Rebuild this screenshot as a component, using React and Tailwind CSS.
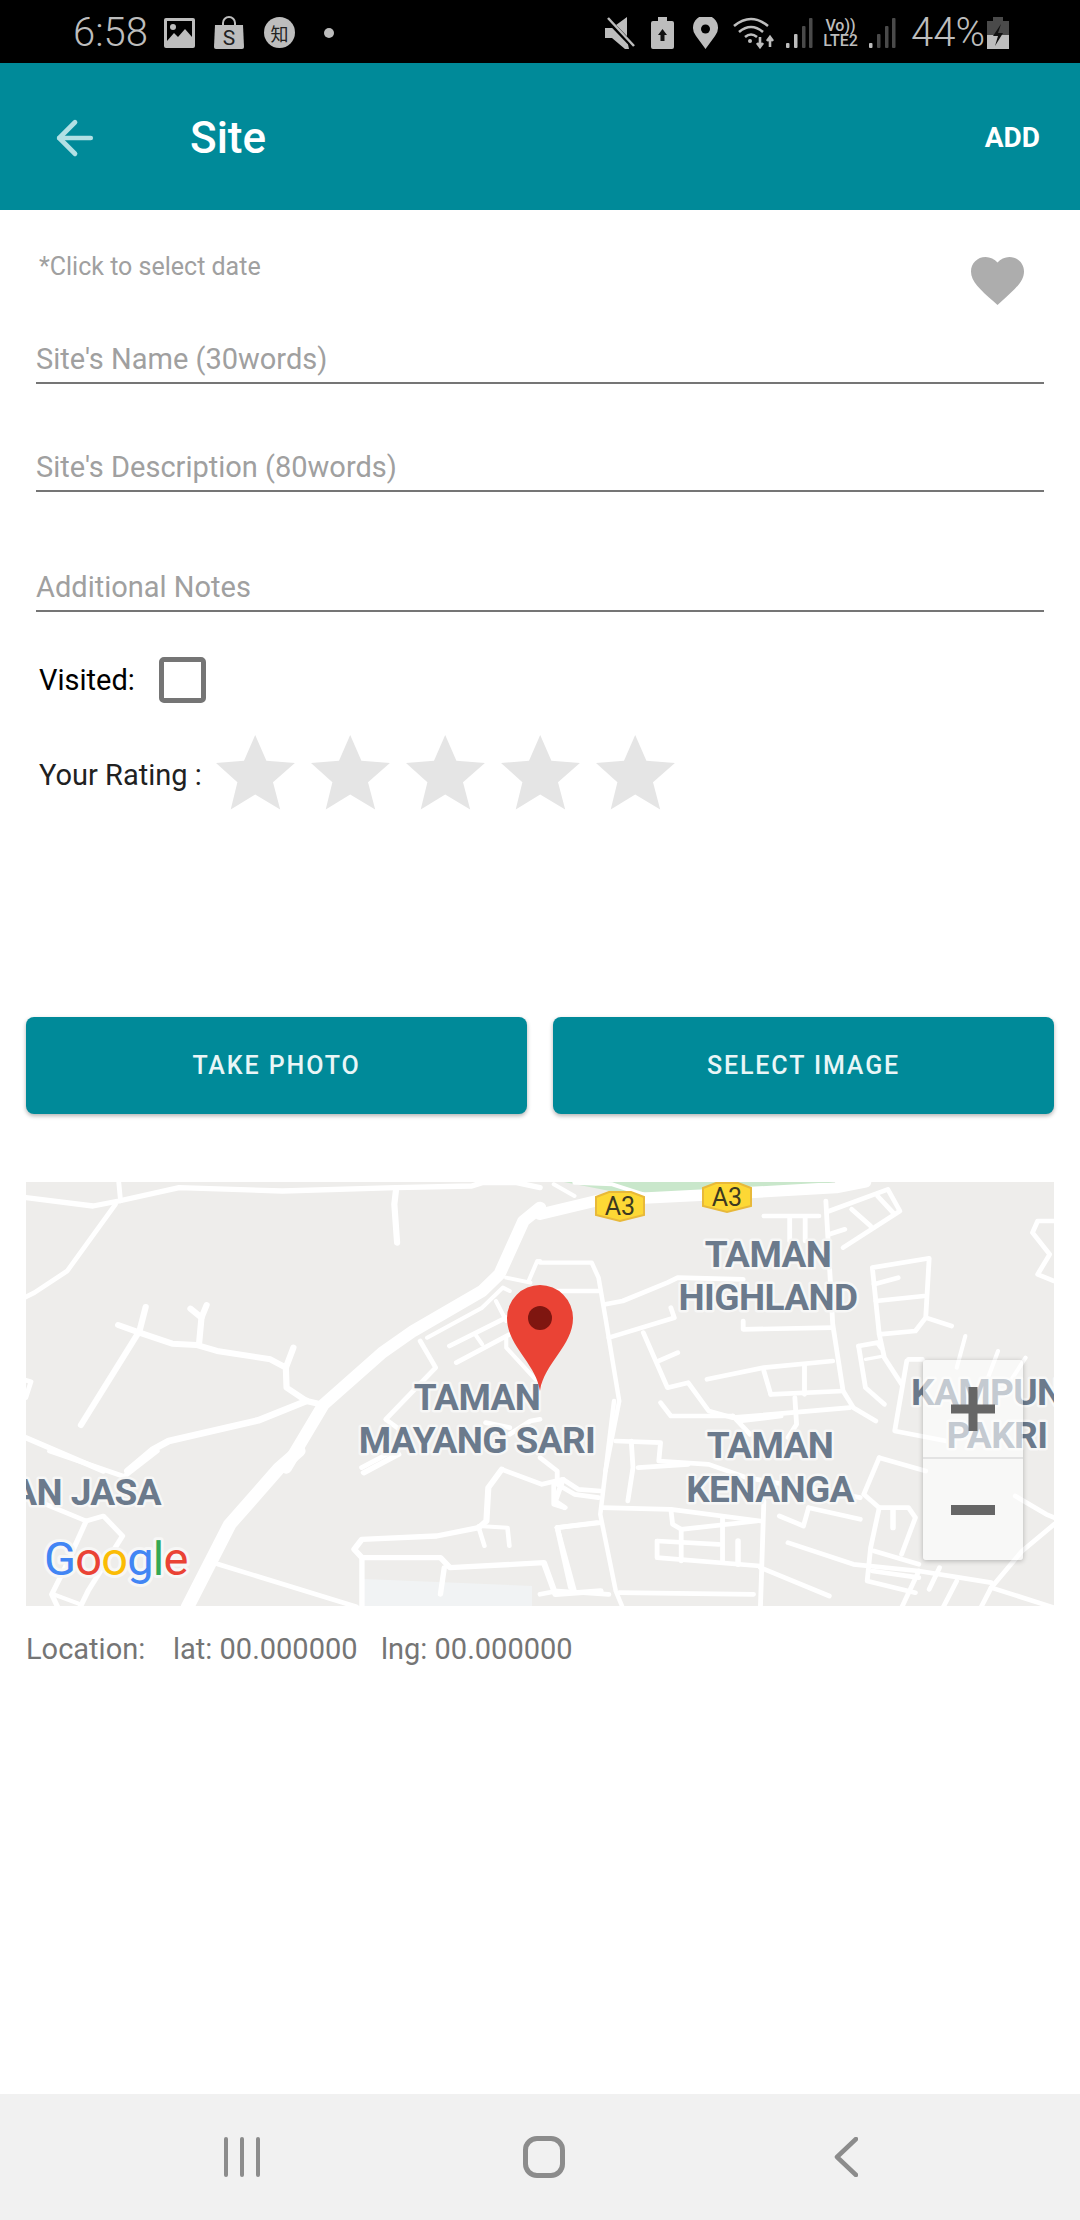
import { ArrowLeft } from 'lucide-react'

const ROBOTO = 'font-[Roboto,sans-serif]'

// road polylines, taken from crops of the map: [stroke width, x, y, x, y, ...]
const ROADS_TL = [
  [16, 75,80,270,105,345,90,520,50,820,60,1150,50,1370,45,1400,35,1500,35,1568,50],
  [14, 345,35,350,90],
  [14, 335,100,195,300,100,365,75,378],
  [18, 1150,55,1145,100,1153,215],
  [18, 343,462,405,485,500,518,570,522,630,540,785,565,830,590,832,650,890,690,940,702],
  [18, 423,408,405,480,235,762],
  [18, 553,413,585,440,600,402],
  [18, 585,440,578,518],
  [18, 852,530,830,590],
  [20, 890,690,750,748,490,810,445,835,370,900],
  [16, 75,800,300,900],
  [14, 75,628,90,632,75,680],
  [36, 1568,110,1520,150,1450,310,1400,360,1200,480,1110,545,940,700,830,890],
  [12, 1240,500,1400,410,1460,350,1480,360],
  [14, 1305,525,1470,440],
  [14, 1325,575,1480,490],
  [12, 1380,490,1400,520],
  [12, 1440,390,1470,450],
  [12, 1470,320,1540,335],
  [12, 1535,330,1560,270,1568,270],
  [14, 1220,510,1265,590,1120,745,1180,790],
  [14, 1050,890,1160,830],
  [14, 1480,790,1540,750,1568,745],
  [14, 1410,755,1480,770],
  [12, 1470,500,1470,530,1568,640],
]

const ROADS_TR = [
  [34, 0,130,170,88,480,72,860,50,945,33],
  [12, 40,40,100,75],
  [12, 100,35,210,40,300,70],
  [14, 830,90,850,460,880,660,910,710,975,750],
  [14, 650,135,810,135],
  [14, 725,140,725,210],
  [14, 770,140,770,210],
  [14, 840,120,1010,55,1045,120,880,230],
  [14, 905,115,960,165],
  [14, 980,75,1025,125],
  [14, 840,190,885,175],
  [13, 0,275,150,275,170,320,190,440,230,690,190,900],
  [14, 0,360,170,360],
  [14, 190,400,240,390,370,335,400,320,590,325],
  [14, 200,500,390,440,380,410],
  [14, 300,485,370,650,430,635,490,720,560,740,900,710],
  [14, 345,570,400,545],
  [14, 590,450,590,475,850,470],
  [14, 485,625,650,590,850,570],
  [14, 650,600,670,670],
  [14, 768,585,768,670],
  [14, 670,670,880,660],
  [14, 350,695,380,735,560,735],
  [14, 560,735,610,790],
  [14, 580,750,700,735],
  [14, 740,680,745,760,720,800],
  [14, 965,290,1130,262,1120,440,1090,480,985,490,965,290],
  [14, 970,340,1040,320],
  [14, 975,390,1115,375],
  [14, 1120,440,1195,465],
  [14, 985,490,1000,560,1050,640],
  [14, 925,525,980,515,990,530],
  [14, 925,525,945,650,1000,700],
  [10, 945,565,1000,555],
  [12, 1235,495,1210,590],
  [12, 1330,540,1290,650],
  [12, 1410,560,1360,640],
  [14, 1070,565,1110,565],
  [14, 1065,570,1030,780,1180,810],
  [14, 1493,150,1445,150,1430,185,1480,250,1445,310,1493,330],
]

const ROADS_BR = [
  [13, 215,0,175,340,220,570,240,620],
  [14, 180,320,380,325,640,360],
  [14, 220,120,350,125,345,180,490,190,600,230,930,290],
  [14, 265,120,270,200,255,300],
  [14, 285,200,430,190],
  [14, 380,325,385,370,410,385,630,360],
  [14, 410,385,410,480],
  [14, 530,350,530,480],
  [14, 340,420,340,470,640,495],
  [14, 340,420,520,430],
  [16, 575,420,575,490],
  [14, 650,300,640,620],
  [14, 640,500,840,585],
  [14, 720,425,910,490,1100,510,1310,545],
  [14, 695,345,765,375,780,320],
  [14, 780,320,930,355],
  [14, 985,170,940,280,985,320,1070,320,1090,350,1050,460],
  [14, 985,170,1120,210],
  [16, 1025,325,1025,380],
  [14, 985,320,960,440,950,540,1090,575],
  [14, 970,450,1100,490],
  [14, 965,510,1100,530],
  [14, 0,580,50,570,200,580],
  [14, 50,380,165,365],
  [14, 50,380,100,570],
  [14, 230,575,620,580],
  [14, 0,170,50,210,50,250,100,280,170,290],
  [14, 40,250,40,310,70,320],
  [14, 1130,565,1160,500],
  [14, 1380,285,1470,340,1493,350],
  [14, 1493,370,1400,450,1310,560,1280,620],
  [14, 1210,540,1170,620],
  [14, 1310,560,1493,620],
  [14, 1100,510,1050,620],
]

const ROADS_BL = [
  [36, 780,0,730,50,600,220,490,467],
  [14, 130,0,320,75],
  [14, 410,0,320,80],
  [14, 120,160,225,210,270,195,320,255,230,420,210,467],
  [14, 225,210,170,350,135,430,150,467],
  [12, 140,430,210,460],
  [14, 570,340,930,467],
  [16, 950,65,1040,10],
  [14, 1310,55,1415,100,1470,85,1510,115,1568,120],
  [16, 1310,55,1275,110,1270,210,1250,230,1140,255,945,265,925,295,945,320,1150,320,1175,350,1420,335,1450,430,1568,420],
  [14, 945,320,945,467],
  [12, 1250,230,1265,285],
  [12, 1250,225,1325,230,1330,285],
  [14, 1160,350,1150,430],
  [14, 1455,230,1568,215],
  [14, 1455,230,1490,410],
  [14, 1470,85,1450,150,1475,170],
]

function Roads({ data, transform }) {
  return (
    <g transform={transform} fill="none" stroke="#ffffff" strokeLinecap="round" strokeLinejoin="round">
      {data.map(([w, ...pts], i) => (
        <polyline key={i} strokeWidth={w} points={pts.join(' ')} />
      ))}
    </g>
  )
}

const LABELS = [
  ['TAMAN', 768, 1266], ['HIGHLAND', 768, 1309],
  ['TAMAN', 477, 1409], ['MAYANG SARI', 477, 1452],
  ['TAMAN', 770, 1457], ['KENANGA', 770, 1501],
  ['PAKRI', 997, 1447],
]

function MapLabel({ x, y, anchor = 'middle', children }) {
  return (
    <text
      x={x} y={y} textAnchor={anchor} fontFamily="Roboto" fontWeight="700" fontSize="37" letterSpacing="-0.6"
      fill="#6b7a8c" stroke="#f7f7f6" strokeWidth="5" paintOrder="stroke" strokeLinejoin="round"
    >
      {children}
    </text>
  )
}

function Shield({ cx, cy }) {
  return (
    <g>
      <path
        d={`M${cx - 24} ${cy - 9} L${cx - 11} ${cy - 14} H${cx + 11} L${cx + 24} ${cy - 9} V${cy + 9} L${cx} ${cy + 15} L${cx - 24} ${cy + 9} Z`}
        fill="#fdd835" stroke="#e8b93a" strokeWidth="2"
      />
      <text x={cx} y={cy + 9} textAnchor="middle" fontFamily="Roboto" fontSize="25" fill="#3c3a20">A3</text>
    </g>
  )
}

function GoogleMap() {
  return (
    <div className="relative mx-[26px] mt-[68px] h-[424px] overflow-hidden bg-[#eeedeb]">
      <svg width="1028" height="424" viewBox="26 1181 1028 424" className="block">
        <path d="M564 1181 H836 L800 1186 L700 1194 L610 1190 Z" fill="#c9e7cb" />
        <path d="M364 1578 L532 1585 V1605 H364 Z" fill="#f1f3f4" />
        <Roads data={ROADS_TL} transform="translate(0 1170) scale(.3444 .3333)" />
        <Roads data={ROADS_TR} transform="translate(540 1170) scale(.3444 .3333)" />
        <Roads data={ROADS_BR} transform="translate(540 1400) scale(.3444 .3333)" />
        <Roads data={ROADS_BL} transform="translate(0 1450) scale(.383 .3333)" />
        <Shield cx={620} cy={1205} />
        <Shield cx={727} cy={1196} />
        {LABELS.map(([t, x, y], i) => (
          <MapLabel key={i} x={x} y={y}>{t}</MapLabel>
        ))}
        <MapLabel x={911} y={1404} anchor="start">KAMPUN</MapLabel>
        <MapLabel x={161} y={1504} anchor="end">AN JASA</MapLabel>
        <path d="M540 1390 C536 1362 507 1345 507 1317 A33 33 0 0 1 573 1317 C573 1345 544 1362 540 1390Z" fill="#ea4335" />
        <circle cx="540" cy="1317" r="12" fill="#7f1610" />
        <text
          x="44" y="1574" fontFamily="Roboto" fontWeight="400" fontSize="47" letterSpacing="-0.8"
          stroke="#f7f7f6" strokeWidth="6" paintOrder="stroke" strokeLinejoin="round"
        >
          <tspan fill="#4285f4">G</tspan>
          <tspan fill="#ea4335">o</tspan>
          <tspan fill="#fbbc05">o</tspan>
          <tspan fill="#4285f4">g</tspan>
          <tspan fill="#34a853">l</tspan>
          <tspan fill="#ea4335">e</tspan>
        </text>
      </svg>

      {/* zoom control sits over the map and lets the labels show through */}
      <div className="absolute left-[897px] top-[178px] flex h-[200px] w-[100px] flex-col rounded-[3px] bg-white/60 shadow-[0_1px_5px_rgba(0,0,0,0.25)]">
        <div className="flex h-[99px] items-center justify-center border-b-2 border-[#e3e3e3]">
          <svg width="44" height="44" viewBox="0 0 44 44"><path d="M0 17.5H44V26.5H0ZM17.5 0H26.5V44H17.5Z" fill="#666666" /></svg>
        </div>
        <div className="flex flex-1 items-center justify-center">
          <svg width="44" height="10" viewBox="0 0 44 10"><rect width="44" height="10" fill="#666666" /></svg>
        </div>
      </div>
    </div>
  )
}

function Signal({ bright }) {
  return (
    <svg width="27" height="30" viewBox="0 0 27 30">
      {[[0, 25, 5], [8, 16, 14], [16, 8, 22], [23, 0, 30]].map(([x, y, h], i) => (
        <rect key={i} x={x} y={y} width="3.5" height={h} rx="1" fill={i < bright ? '#bdbdbd' : '#4a4a4a'} />
      ))}
    </svg>
  )
}

function StatusBar() {
  return (
    <div className={`flex h-[63px] items-center bg-black pt-[2px] pl-[73px] text-[#bdbdbd] ${ROBOTO}`}>
      <span className="w-[91px] text-[40px] leading-none font-light">6:58</span>
      <svg width="31" height="30" viewBox="0 0 31 30">
        <rect width="31" height="30" rx="2" fill="#bdbdbd" />
        <rect x="3" y="3" width="25" height="20" fill="#000" />
        <circle cx="9" cy="9" r="3" fill="#bdbdbd" />
        <path d="M3 23 L10 15 L14 19 L21 11 L28 19 V24 H3Z" fill="#bdbdbd" />
      </svg>
      <svg width="30" height="33" viewBox="0 0 30 33" className="ml-[19px]">
        <path d="M9 10 V7 A6 6 0 0 1 21 7 V10" fill="none" stroke="#bdbdbd" strokeWidth="2" />
        <path d="M1 9 H29 L30 31 Q30 33 28 33 H2 Q0 33 0 31 Z" fill="#bdbdbd" />
        <text x="15" y="29" textAnchor="middle" fontFamily="Roboto" fontSize="21" fill="#222">S</text>
      </svg>
      <span className="ml-[20px] flex h-[31px] w-[31px] items-center justify-center rounded-full bg-[#bdbdbd] font-['Noto_Sans_CJK_SC',sans-serif] text-[18px] leading-none text-[#222]">知</span>
      <span className="ml-[29px] h-[10px] w-[10px] rounded-full bg-[#bdbdbd]" />

      <svg width="30" height="32" viewBox="0 0 30 32" className="ml-[271px]">
        <path d="M0 11 H7 L22 0 V22 L24 32 H20 L7 21 H0 Z" fill="#bdbdbd" />
        <path d="M1 1 L29 30" stroke="#000" strokeWidth="5" />
        <path d="M3 1 L29 29" stroke="#bdbdbd" strokeWidth="2.5" />
      </svg>
      <svg width="23" height="32" viewBox="0 0 23 32" className="ml-[16px]">
        <path d="M7 0 H16 V4 H21 Q23 4 23 6 V30 Q23 32 21 32 H2 Q0 32 0 30 V6 Q0 4 2 4 H7 Z" fill="#bdbdbd" />
        <path d="M11.5 12 L16 18 H13.5 V24 H9.5 V18 H7 Z" fill="#111" />
      </svg>
      <svg width="25" height="32" viewBox="0 0 25 32" className="ml-[19px]">
        <path d="M12.5 32 L3 19 A12.5 12.5 0 1 1 22 19 Z" fill="#bdbdbd" />
        <circle cx="12.5" cy="12" r="4.5" fill="#000" />
      </svg>
      <svg width="41" height="32" viewBox="0 0 41 32" className="ml-[15px]" fill="none" stroke="#bdbdbd" strokeWidth="2.6">
        <path d="M1 9 Q18 -5 35 9" />
        <path d="M6 15 Q18 5 30 15" />
        <path d="M12 20 Q18 15 24 20" />
        <circle cx="17" cy="24" r="2" fill="#bdbdbd" stroke="none" />
        <path d="M27 20 V30 M24 26 L27 30 L30 26 M37 30 V20 M34 24 L37 20 L40 24" />
      </svg>
      <span className="ml-[12px]"><Signal bright={2} /></span>
      <span className="ml-[8px] flex w-[39px] flex-col items-center text-[16px] leading-[15px] font-medium">
        <span>Vo))</span>
        <span>LTE2</span>
      </span>
      <span className="ml-[9px]"><Signal bright={1} /></span>
      <span className="ml-[15px] w-[76px] text-[40px] leading-none font-light">44%</span>
      <svg width="22" height="32" viewBox="0 0 22 32">
        <path d="M6 0 H16 V4 H22 V32 H0 V4 H6 Z" fill="#4a4a4a" />
        <path d="M0 18 H22 V32 H0 Z" fill="#bdbdbd" />
        <path d="M14 7 L6 19 H11 L8 29 L16 16 H11 Z" fill="#111" />
      </svg>
    </div>
  )
}

function Field({ label, className }) {
  return (
    <div className={`mx-[36px] flex h-[74px] items-end border-b-2 border-[#757575] pb-[3px] text-[29px] leading-[40px] text-[#a0a0a0] ${className}`}>
      {label}
    </div>
  )
}

function Star() {
  return (
    <svg width="79" height="75" viewBox="0 0 79 75">
      <polygon points="39.2,0 50.4,25.7 78.9,28 57,47.3 64.2,74.6 39.2,59.6 14.7,74.6 21.4,47.3 0,28 28,25.7" fill="#e5e5e5" />
    </svg>
  )
}

function ActionButton({ children }) {
  return (
    <button className="h-[97px] flex-1 rounded-[8px] bg-[#008a99] text-[25px] font-medium tracking-[1.9px] text-[#e9f6f7] shadow-[0_2px_4px_rgba(0,0,0,0.3)]">
      {children}
    </button>
  )
}

export default function App() {
  return (
    <div className={`flex h-[2220px] w-[1080px] flex-col overflow-hidden bg-white ${ROBOTO}`}>
      <StatusBar />

      <header className="flex h-[147px] items-center bg-[#008a99] pt-[2px] pr-[40px] pl-[48px]">
        <ArrowLeft size={54} strokeWidth={2.1} className="text-[#b2e0e4]" />
        <h1 className="ml-[88px] text-[44px] font-medium text-white">Site</h1>
        <span className="ml-auto text-[28px] font-bold text-white">ADD</span>
      </header>

      <main className="flex-1">
        <div className="flex h-[100px] items-start justify-between pr-[56px] pl-[39px]">
          <span className="mt-[41px] text-[25px] leading-[32px] text-[#a0a0a0]">*Click to select date</span>
          <svg width="53" height="48" viewBox="2 3 20 18.35" className="mt-[47px]" preserveAspectRatio="none">
            <path d="M12 21.35l-1.45-1.32C5.4 15.36 2 12.28 2 8.5 2 5.42 4.42 3 7.5 3c1.74 0 3.41.81 4.5 2.09C13.09 3.81 14.76 3 16.5 3 19.58 3 22 5.42 22 8.5c0 3.78-3.4 6.86-8.55 11.54L12 21.35z" fill="#adadad" />
          </svg>
        </div>

        <Field label="Site's Name (30words)" />
        <Field label="Site's Description (80words)" className="mt-[34px]" />
        <Field label="Additional Notes" className="mt-[46px]" />

        <div className="mt-[45px] flex h-[46px] items-center pl-[39px] text-[29px] text-black">
          <span className="w-[120px] pt-[2px]">Visited:</span>
          <span className="h-[46px] w-[47px] rounded-[5px] border-[5px] border-[#757575]" />
        </div>

        <div className="mt-[32px] flex items-center pl-[39px]">
          <span className="mt-[6px] w-[177px] text-[29px] text-[#212121]">Your Rating :</span>
          <div className="flex gap-[16px]">
            <Star /><Star /><Star /><Star /><Star />
          </div>
        </div>

        <div className="mt-[207px] flex gap-[26px] px-[26px]">
          <ActionButton>TAKE PHOTO</ActionButton>
          <ActionButton>SELECT IMAGE</ActionButton>
        </div>

        <GoogleMap />

        <div className="mt-[23px] flex pl-[26px] text-[29px] leading-[40px] text-[#757575]">
          <span className="w-[147px]">Location:</span>
          <span className="w-[208px]">lat: 00.000000</span>
          <span>lng: 00.000000</span>
        </div>
      </main>

      <nav className="flex h-[126px] items-center justify-center bg-[#f1f1f1] pl-[8px]">
        <div className="flex w-[302px] justify-center gap-[12px]">
          <span className="h-[40px] w-[4px] rounded-full bg-[#8c8c8c]" />
          <span className="h-[40px] w-[4px] rounded-full bg-[#8c8c8c]" />
          <span className="h-[40px] w-[4px] rounded-full bg-[#8c8c8c]" />
        </div>
        <div className="flex w-[302px] justify-center">
          <span className="h-[42px] w-[42px] rounded-[14px] border-[5px] border-[#8c8c8c]" />
        </div>
        <div className="flex w-[302px] justify-center">
          <svg width="24" height="40" viewBox="0 0 24 40" fill="none" stroke="#8c8c8c" strokeWidth="4.5" strokeLinecap="round" strokeLinejoin="round">
            <path d="M22 2 L3 20 L22 38" />
          </svg>
        </div>
      </nav>
    </div>
  )
}
